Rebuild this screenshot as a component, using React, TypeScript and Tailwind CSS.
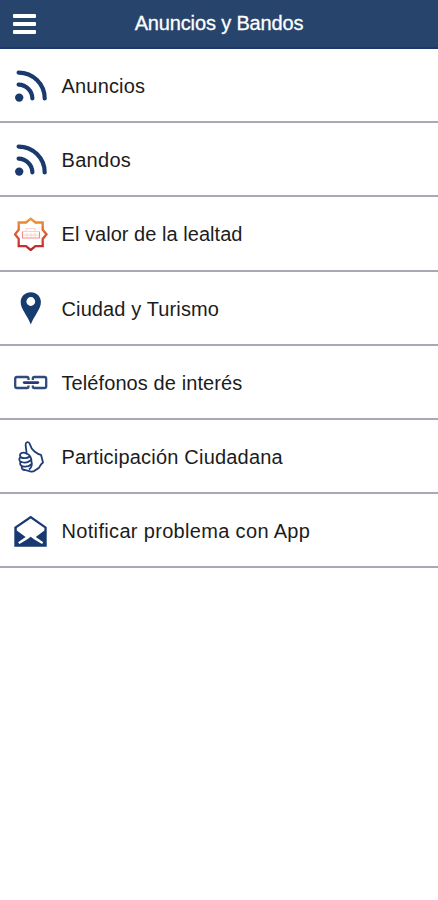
import type { ReactNode } from 'react'

function RssIcon() {
    return (
        <svg className="size-[34px]" viewBox="0 0 34 34" fill="none" stroke="#1a3a6e" strokeWidth="4.2" strokeLinecap="round">
            <circle cx="5.2" cy="28.6" r="4.2" fill="#1a3a6e" stroke="none" />
            <path d="M4.6 15.6A14.2 14.2 0 0 1 18.4 29.4" />
            <path d="M4.6 3.6A26 26 0 0 1 30.7 29.4" />
        </svg>
    )
}

function StarIcon() {
    return (
        <svg className="size-[34px]" viewBox="0 0 34 34" fill="none">
            <defs>
                <linearGradient id="star" x1="0" y1="0" x2="0" y2="1">
                    <stop offset="0" stopColor="#eb9a35" />
                    <stop offset="0.5" stopColor="#e2562f" />
                    <stop offset="1" stopColor="#c3202c" />
                </linearGradient>
            </defs>
            <path
                d="M16.7 1.7L21.4 5.5H28.7V12.8L32.5 17.3L28.7 21.9V29.1H21.4L16.7 33L12 29.1H4.7V21.9L1 17.3L4.7 12.8V5.5H12Z"
                stroke="url(#star)"
                strokeWidth="2.3"
            />
            <path d="M8.5 14.5V21H25.5V14.5" stroke="#ef8f8b" strokeWidth="1.2" />
            <path d="M9 14.5H25M9.5 18H25M12 14V11.5H21V14M13 16V20M17 16V20M21 16V20" stroke="#f8d3c9" strokeWidth="1" />
        </svg>
    )
}

function PinIcon() {
    return (
        <svg className="size-[34px]" viewBox="0 0 34 34">
            <path
                fill="#173c70"
                fillRule="evenodd"
                d="M16.8 .3C11 .3 6.7 4.6 6.7 10.2C6.7 14.1 8.5 17.1 10.5 20.6C13 24.9 15.2 28.6 16.8 32.6C18.4 28.6 20.6 24.9 23.1 20.6C25.1 17.1 26.9 14.1 26.9 10.2C26.9 4.6 22.6 .3 16.8 .3ZM16.8 5.1A4.4 4.4 0 1 1 16.8 13.9A4.4 4.4 0 1 1 16.8 5.1Z"
            />
        </svg>
    )
}

function LinkIcon() {
    return (
        <svg className="size-[34px]" viewBox="0 0 34 34" fill="none" stroke="#2f4a7d" strokeWidth="2.3">
            <path d="M14.5 14V12.5Q14.5 11 13 11H3Q1.2 11 1.2 12.8V20.2Q1.2 22 3 22H13Q14.5 22 14.5 20.5V19.5" />
            <path d="M18.8 14V12.5Q18.8 11 20.4 11H30.4Q32.2 11 32.2 12.8V20.2Q32.2 22 30.4 22H20.4Q18.8 22 18.8 20.5V19.5" />
            <path d="M10.3 16.6H23.8" stroke="#26397a" strokeWidth="2.9" strokeLinecap="round" />
        </svg>
    )
}

function ThumbIcon() {
    return (
        <svg className="size-[34px]" viewBox="0 0 34 34" fill="none" stroke="#1f3c74" strokeWidth="1.8" strokeLinecap="round" strokeLinejoin="round">
            <path d="M12.5 13.5C12.8 10 11.3 7 11.7 4C12 1.5 15 1.5 15.8 4C16.6 7 18 9.5 20.5 11.5C23 13.5 25 14.5 27 14.8L29 22.5C27 24 25.8 25.5 25 27.8C22 29 20.5 32 17 31.7L9.5 29.5" />
            <path d="M12.5 13.5C9.5 12 6 12.5 6 15.3C6 17 7.5 18 9 18M6.5 17C4.5 18.5 5 21.5 7.5 22M6.5 22C5.5 24 6.5 26 8.8 26.3M8 26.5C7 28.5 8.5 30 10.5 30M9 18C11.5 18.5 14 18 15.5 16.5M7.5 22C10.5 23 14 22.5 16.3 20.5M8.8 26.3C12 27 15.5 26 17 24.3M12.5 13.5C15.5 14.5 17.5 18 17.5 22C18.5 24 17.5 27.5 15.5 29" />
        </svg>
    )
}

function MailIcon() {
    return (
        <svg className="size-[34px]" viewBox="0 0 34 34">
            <path d="M.3 13L16.7 1.7L32.7 13V32.8H.3Z" fill="#173a70" />
            <path d="M2.8 14L16.7 4.4L30.4 14V16.5L21.8 23L29.3 28.3L28 30L20 25.2L16.7 22.8L13.4 25.2L5.4 30L4.1 28.3L11.6 23L2.8 16.5Z" fill="#fff" />
        </svg>
    )
}

const items: { label: string; icon: ReactNode; tracking: string }[] = [
    { label: 'Anuncios', icon: <RssIcon />, tracking: 'tracking-[0.18px]' },
    { label: 'Bandos', icon: <RssIcon />, tracking: 'tracking-[0.3px]' },
    { label: 'El valor de la lealtad', icon: <StarIcon />, tracking: 'tracking-[0.04px]' },
    { label: 'Ciudad y Turismo', icon: <PinIcon />, tracking: 'tracking-[0.12px]' },
    { label: 'Teléfonos de interés', icon: <LinkIcon />, tracking: 'tracking-[0.09px]' },
    { label: 'Participación Ciudadana', icon: <ThumbIcon />, tracking: 'tracking-[0.2px]' },
    { label: 'Notificar problema con App', icon: <MailIcon />, tracking: 'tracking-[0.33px]' },
]

export default function App() {
    return (
        <div className="min-h-screen bg-white font-['Liberation_Sans',Arial,sans-serif]">
            <header className="grid h-[49px] grid-cols-[1fr_auto_1fr] items-center border-b-2 border-[#1c3a68] bg-[#27446d] px-3 pb-px">
                <button aria-label="Menú" className="ml-px flex w-[23px] flex-col gap-1 pt-0.5">
                    <span className="h-1 rounded-[1px] bg-white" />
                    <span className="h-1 rounded-[1px] bg-white" />
                    <span className="h-1 rounded-[1px] bg-white" />
                </button>
                <h1 className="text-[20px] leading-6 tracking-[-0.15px] text-white [-webkit-text-stroke:0.3px_white]">Anuncios y Bandos</h1>
            </header>

            <nav>
                <ul>
                    {items.map(item => (
                        <li key={item.label} className="h-[74.2px] border-b-2 border-[#a9a9b5]">
                            <a href="#" className="flex h-full items-center gap-[13.5px] pt-0.5 pl-3.5">
                                {item.icon}
                                <span className={`text-[20px] text-[#1c1c1c] ${item.tracking}`}>{item.label}</span>
                            </a>
                        </li>
                    ))}
                </ul>
            </nav>
        </div>
    )
}
